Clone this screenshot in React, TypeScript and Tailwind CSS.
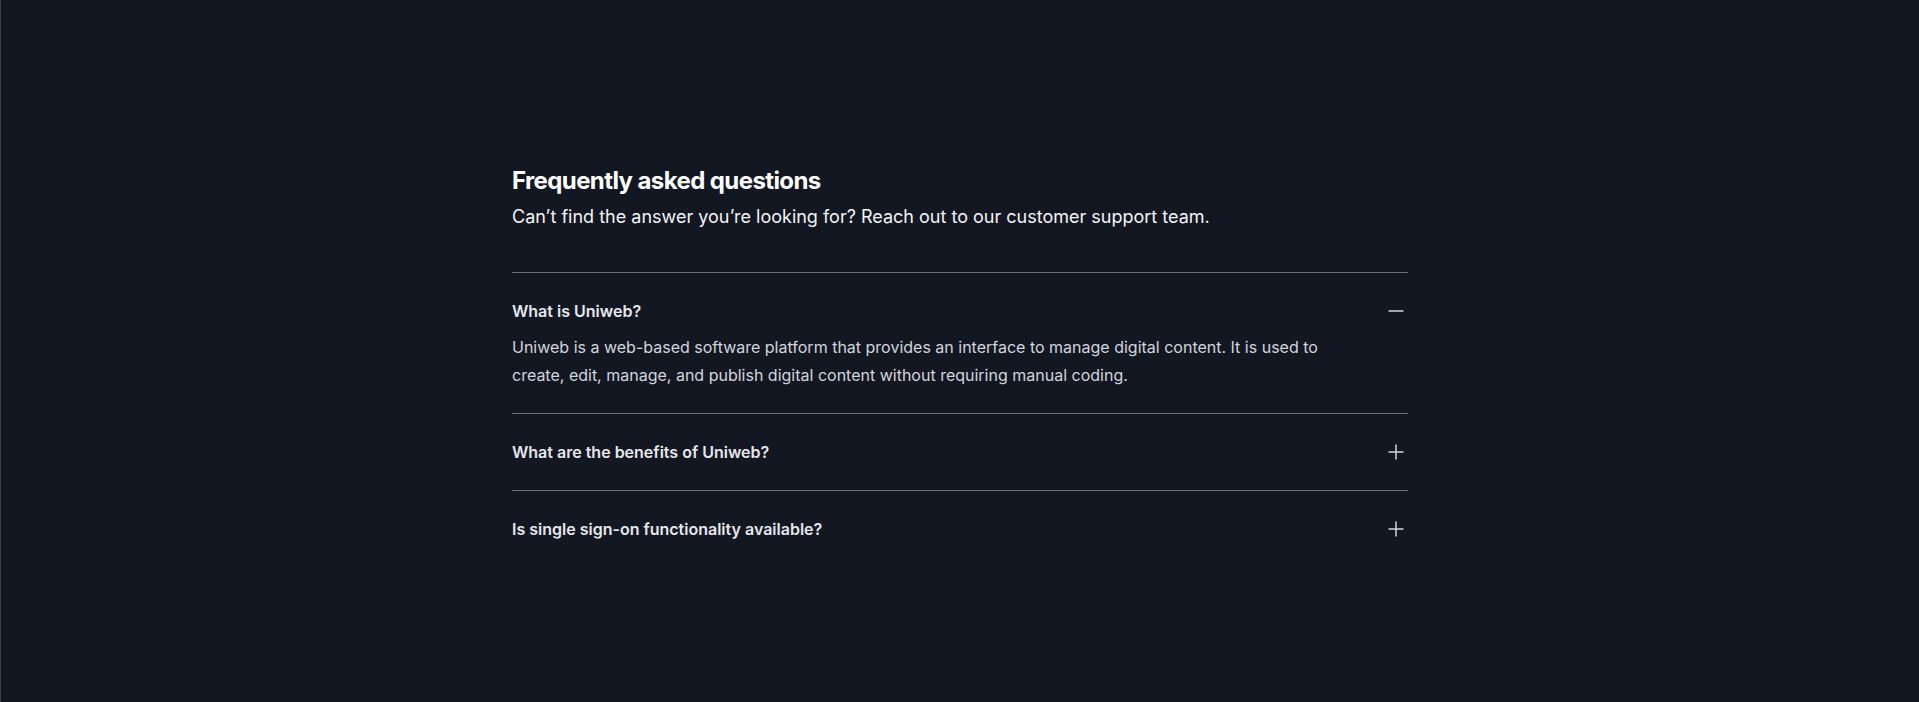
import React, { useState } from "react";

const faqs = [
  {
    q: "What is Uniweb?",
    a: "Uniweb is a web-based software platform that provides an interface to manage digital content. It is used to create, edit, manage, and publish digital content without requiring manual coding.",
  },
  {
    q: "What are the benefits of Uniweb?",
    a: "Uniweb helps teams build and maintain websites faster, with reusable components and structured content.",
  },
  {
    q: "Is single sign-on functionality available?",
    a: "Yes, single sign-on is available for organizations that need centralized authentication.",
  },
];

function PlusIcon() {
  return (
    <svg viewBox="0 0 24 24" fill="none" stroke="currentColor" strokeWidth={1.5} className="size-6" aria-hidden="true">
      <path strokeLinecap="butt" d="M12 4.5v15m7.5-7.5h-15" />
    </svg>
  );
}

function MinusIcon() {
  return (
    <svg viewBox="0 0 24 24" fill="none" stroke="currentColor" strokeWidth={1.5} className="size-6" aria-hidden="true">
      <path strokeLinecap="butt" d="M19.5 12h-15" />
    </svg>
  );
}

export default function App() {
  const [open, setOpen] = useState<number>(0);
  return (
    <div
      className="min-h-screen bg-[#131722] border-l border-[#374151]"
      style={{ fontFamily: "Inter, 'Noto Sans', sans-serif" }}
    >
      <div className="mx-auto max-w-4xl pt-[165px] pb-24">
        <h2 className="text-2xl/8 font-bold tracking-tight text-white">Frequently asked questions</h2>
        <p className="mt-1.5 text-lg/7 text-gray-100">
          Can’t find the answer you’re looking for? Reach out to our customer support team.
        </p>
        <dl className="mt-[41px] border-t border-[#6b7280] divide-y divide-[#6b7280]">
          {faqs.map((f, i) => (
            <div key={f.q} className="py-6">
              <dt>
                <button
                  type="button"
                  onClick={() => setOpen(open === i ? -1 : i)}
                  className="flex w-full items-start justify-between text-left text-gray-200"
                >
                  <span className="text-base/7 font-semibold">{f.q}</span>
                  <span className="ml-6 flex h-7 items-center text-gray-300">
                    {open === i ? <MinusIcon /> : <PlusIcon />}
                  </span>
                </button>
              </dt>
              {open === i && (
                <dd className="mt-2 pr-12">
                  <p className="text-base/7 text-gray-300">{f.a}</p>
                </dd>
              )}
            </div>
          ))}
        </dl>
      </div>
    </div>
  );
}
